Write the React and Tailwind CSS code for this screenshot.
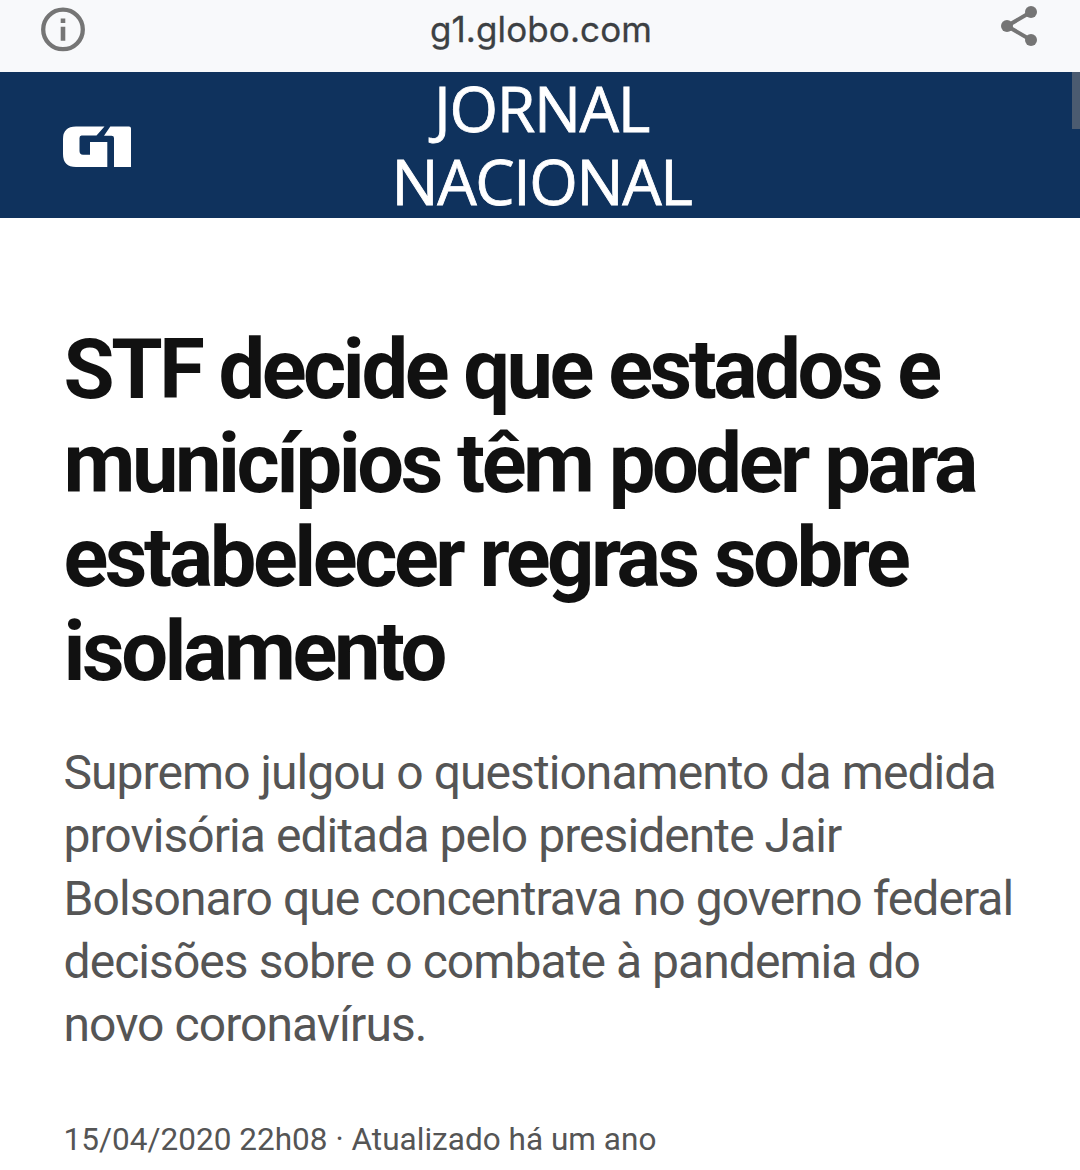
const headline = ["STF decide que estados e", "municípios têm poder para", "estabelecer regras sobre", "isolamento"];
const summary = ["Supremo julgou o questionamento da medida", "provisória editada pelo presidente Jair", "Bolsonaro que concentrava no governo federal", "decisões sobre o combate à pandemia do", "novo coronavírus."];

export default function App() {
  return (
    <div className="h-[1170px] w-[1080px] overflow-hidden bg-white font-['Roboto',sans-serif]">
      <div className="flex h-[72px] items-start justify-between bg-[#f8f9fb] px-[41px] text-[#757575]">
        <svg className="mt-[7px] h-[45px] w-[44px]" viewBox="0 0 44 45">
          <circle cx="22" cy="22.4" r="19.8" fill="none" stroke="currentColor" strokeWidth="4.3" />
          <path d="M19.7 19.7h4.6v14h-4.6zM19.7 11.4h4.6V16h-4.6z" fill="currentColor" />
        </svg>
        <div className="mt-[5px] mr-[4px] font-['Inter',sans-serif] text-[35px] leading-[48px] tracking-[0.1px] text-[#3c4043] [-webkit-text-stroke:0.3px_#3c4043]">g1.globo.com</div>
        <svg className="mt-[6px] h-[40px] w-[38px]" viewBox="0 0 38 40">
          <path d="M30 6 6 20l24 14" fill="none" stroke="currentColor" strokeWidth="4" />
          <circle cx="30" cy="6" r="6" fill="currentColor" />
          <circle cx="6" cy="20" r="6" fill="currentColor" />
          <circle cx="30" cy="34" r="6" fill="currentColor" />
        </svg>
      </div>
      <header className="relative flex h-[146px] items-start justify-center bg-[#0f325d] text-white">
        <svg className="absolute left-[63px] top-[54px] h-[42px] w-[68px]" viewBox="0 0 68 42" fill="currentColor">
          <path d="M13 .5H41.5L33.5 9.5H18.5Q16.5 9.5 16.5 12V25Q16.5 28.7 20 28.7H27V16H44.3V41H13Q0 41 0 28V13Q0 .5 13 .5Z" />
          <path d="M47.3 .5H66Q68 .5 68 2.5V41H51V12Q51 9.7 48.5 9.7H41Z" />
        </svg>
        <div className="-mt-px ml-[3px] text-center font-['Open_Sans',sans-serif] text-[62.5px] leading-[73px] tracking-[-1.4px] [-webkit-text-stroke:0.8px_white]">
          <div>JORNAL</div>
          <div>NACIONAL</div>
        </div>
        <div className="absolute right-0 top-0 h-[57px] w-[8px] bg-[#4b5b70]" />
      </header>
      <main className="px-[63.5px] pt-[105px]">
        <h1 className="text-[83px] leading-[94px] font-bold tracking-[-3.45px] text-[#111]">
          {headline.map((line) => <div key={line} className="whitespace-nowrap">{line}</div>)}
        </h1>
        <p className="mt-[42px] text-[48px] leading-[63px] tracking-[-0.94px] text-[#555]">
          {summary.map((line) => <span key={line} className="block whitespace-nowrap">{line}</span>)}
        </p>
        <p className="mt-[66px] text-[31.5px] leading-[36px] tracking-[0.03px] text-[#555]">15/04/2020 22h08 · Atualizado há um ano</p>
      </main>
    </div>
  );
}
